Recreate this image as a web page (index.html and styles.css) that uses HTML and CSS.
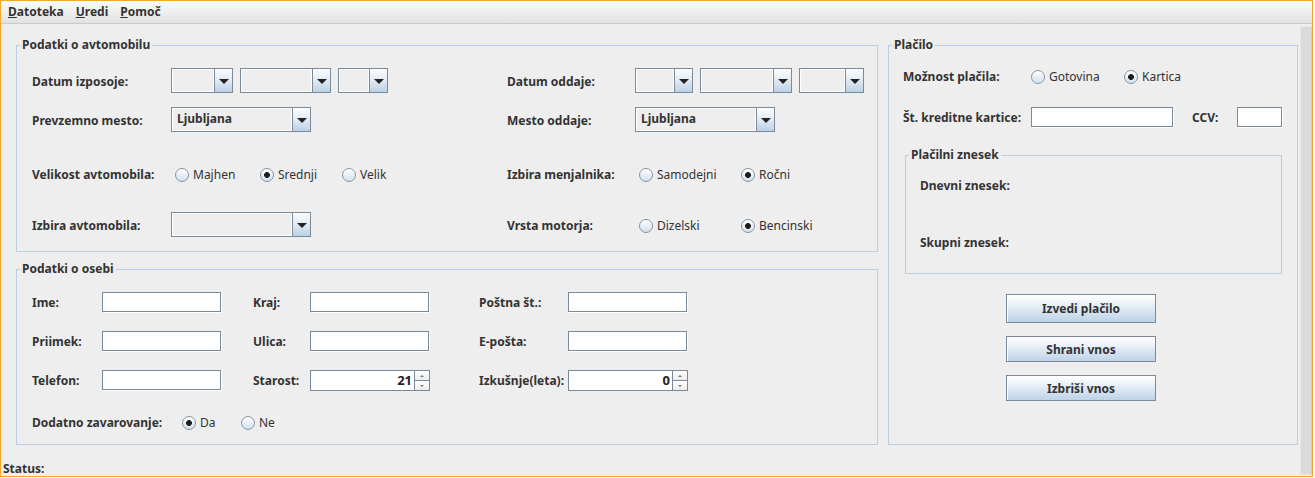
FILE: index.html
```html
<!DOCTYPE html>
<html lang="sl">
<head>
<meta charset="utf-8">
<title>Najem avtomobila</title>
<link rel="stylesheet" href="styles.css">
</head>
<body>
<div class="window">
  <nav class="menubar">
    <span class="menu"><u>D</u>atoteka</span>
    <span class="menu"><u>U</u>redi</span>
    <span class="menu"><u>P</u>omoč</span>
  </nav>
  <div class="frame">
    <div class="main">
      <div class="content">
        <div class="left">
          <fieldset class="panel">
            <legend>Podatki o avtomobilu</legend>
            <div class="car-rows">
              <div class="car-row">
                <span class="lbl">Datum izposoje:</span>
                <div class="combos">
                  <div class="combo w62"><div class="field"></div><div class="arrow"></div></div>
                  <div class="combo w91"><div class="field"></div><div class="arrow"></div></div>
                  <div class="combo w50"><div class="field"></div><div class="arrow"></div></div>
                </div>
                <span class="lbl">Datum oddaje:</span>
                <div class="combos">
                  <div class="combo w58"><div class="field"></div><div class="arrow"></div></div>
                  <div class="combo w92"><div class="field"></div><div class="arrow"></div></div>
                  <div class="combo w65"><div class="field"></div><div class="arrow"></div></div>
                </div>
              </div>
              <div class="car-row gap14">
                <span class="lbl">Prevzemno mesto:</span>
                <div class="combo w140"><div class="field">Ljubljana</div><div class="arrow"></div></div>
                <span class="lbl">Mesto oddaje:</span>
                <div class="combo w140"><div class="field">Ljubljana</div><div class="arrow"></div></div>
              </div>
              <div class="car-row short gap32">
                <span class="lbl">Velikost avtomobila:</span>
                <div class="radios size">
                  <span class="radio">Majhen</span>
                  <span class="radio on">Srednji</span>
                  <span class="radio">Velik</span>
                </div>
                <span class="lbl">Izbira menjalnika:</span>
                <div class="radios pair">
                  <span class="radio">Samodejni</span>
                  <span class="radio on">Ročni</span>
                </div>
              </div>
              <div class="car-row gap28">
                <span class="lbl">Izbira avtomobila:</span>
                <div class="combo w140"><div class="field"></div><div class="arrow"></div></div>
                <span class="lbl">Vrsta motorja:</span>
                <div class="radios pair">
                  <span class="radio">Dizelski</span>
                  <span class="radio on">Bencinski</span>
                </div>
              </div>
            </div>
          </fieldset>

          <fieldset class="panel">
            <legend>Podatki o osebi</legend>
            <div class="person">
              <div class="person-grid">
                <span class="lbl">Ime:</span>
                <div class="text"></div>
                <span class="lbl mid">Kraj:</span>
                <div class="text"></div>
                <span class="lbl last">Poštna št.:</span>
                <div class="text"></div>

                <span class="lbl">Priimek:</span>
                <div class="text"></div>
                <span class="lbl mid">Ulica:</span>
                <div class="text"></div>
                <span class="lbl last">E-pošta:</span>
                <div class="text"></div>

                <span class="lbl">Telefon:</span>
                <div class="text"></div>
                <span class="lbl mid">Starost:</span>
                <div class="spinner"><div class="value">21</div><div class="spin-btns"><span class="up"></span><span class="down"></span></div></div>
                <span class="lbl last">Izkušnje(leta):</span>
                <div class="spinner"><div class="value">0</div><div class="spin-btns"><span class="up"></span><span class="down"></span></div></div>
              </div>
              <div class="extra">
                <span class="lbl">Dodatno zavarovanje:</span>
                <div class="radios yesno">
                  <span class="radio on">Da</span>
                  <span class="radio">Ne</span>
                </div>
              </div>
            </div>
          </fieldset>
        </div>

        <fieldset class="panel right">
          <legend>Plačilo</legend>
          <div class="pay">
            <div class="pay-row">
              <span class="lbl">Možnost plačila:</span>
              <div class="radios cash">
                <span class="radio">Gotovina</span>
                <span class="radio on">Kartica</span>
              </div>
            </div>
            <div class="pay-row card">
              <span class="lbl">Št. kreditne kartice:</span>
              <div class="text wide"></div>
              <span class="lbl ccv">CCV:</span>
              <div class="text narrow"></div>
            </div>
            <fieldset class="panel amount">
              <legend>Plačilni znesek</legend>
              <div class="amount-rows">
                <span class="lbl">Dnevni znesek:</span>
                <span class="lbl total">Skupni znesek:</span>
              </div>
            </fieldset>
            <div class="buttons">
              <button class="btn tall" type="button">Izvedi plačilo</button>
              <button class="btn" type="button">Shrani vnos</button>
              <button class="btn" type="button">Izbriši vnos</button>
            </div>
          </div>
        </fieldset>
      </div>
      <div class="status">Status:</div>
    </div>
    <div class="scrollbar"></div>
  </div>
</div>
</body>
</html>
```

FILE: styles.css
```css
* { box-sizing: border-box; }
html, body { margin: 0; }
body {
  background: #fff;
  font-family: "Noto Sans", "Open Sans", "DejaVu Sans", sans-serif;
  font-size: 12px;
  color: #333;
}

.window {
  width: 1313px;
  height: 477px;
  border: 1px solid #f4a62a;
  background: #eeeeee;
  display: flex;
  flex-direction: column;
}

/* menu bar */
.menubar {
  flex: none;
  height: 23px;
  display: flex;
  padding-left: 1px;
  border-bottom: 1px solid #cacaca;
  background: linear-gradient(#fbfbfb, #e2e2e2);
}
.menu {
  padding: 0 6px;
  line-height: 22px;
  font-weight: bold;
  color: #333;
}

.frame { flex: 1; display: flex; min-height: 0; }
.main { flex: 1; display: flex; flex-direction: column; }
.content {
  display: flex;
  gap: 10px;
  padding: 13px 2px 0 15px;
}
.left {
  width: 862px;
  display: flex;
  flex-direction: column;
  gap: 9px;
}
.scrollbar {
  width: 12px;
  margin: 2px 0 1px;
  background: #dadada;
  border: 1px solid #e6e6e6;
  border-right-color: #cfcfcf;
}
.status {
  margin-top: auto;
  padding-left: 2px;
  line-height: 14px;
  font-weight: bold;
}

/* titled borders */
.panel {
  margin: 0;
  padding: 0;
  min-width: 0;
  border: 1px solid #b8cfe5;
}
.panel > legend {
  margin-left: 3px;
  padding: 0 2px;
  line-height: 16px;
  font-weight: bold;
  color: #333;
}

.lbl {
  font-weight: bold;
  line-height: 16px;
  padding-top: 2px;
  white-space: nowrap;
}

/* car panel */
.car-rows { padding: 15px 0 14px 15px; }
.car-row {
  display: grid;
  grid-template-columns: 139px 336px 128px 1fr;
  align-items: center;
  height: 25px;
}
.car-row.short { height: 20px; }
.gap14 { margin-top: 14px; }
.gap32 { margin-top: 32px; }
.gap28 { margin-top: 28px; }

.combos { display: flex; gap: 7px; }
.combo {
  display: flex;
  height: 25px;
  border: 1px solid #7a8a99;
}
.combo .field {
  flex: 1;
  background: #eeeeee;
  box-shadow: inset 1px 1px 0 #fff, inset -1px -1px 0 #fff;
  padding-left: 5px;
  font-weight: bold;
  line-height: 22px;
}
.combo .arrow {
  flex: none;
  width: 18px;
  border-left: 1px solid #7a8a99;
  background: linear-gradient(#fdfeff, #e3ecf5 45%, #bcd1e6);
  display: flex;
  align-items: center;
  justify-content: center;
}
.combo .arrow::before {
  content: "";
  border-left: 5px solid transparent;
  border-right: 5px solid transparent;
  border-top: 5px solid #222;
  margin-top: 1px;
}
.w62 { width: 62px; }
.w91 { width: 91px; }
.w50 { width: 50px; }
.w58 { width: 58px; }
.w92 { width: 92px; }
.w65 { width: 65px; }
.w140 { width: 140px; }

/* radios */
.radios { display: grid; align-items: center; }
.radios.size { grid-template-columns: 85px 82px auto; }
.radios.pair { grid-template-columns: 102px auto; }
.radios.cash { grid-template-columns: 93px auto; }
.radios.yesno { grid-template-columns: 59px auto; }
.radio {
  display: flex;
  align-items: center;
  gap: 4px;
  padding: 2px 0 0 4px;
  line-height: 16px;
  white-space: nowrap;
}
.radio::before {
  content: "";
  flex: none;
  width: 12px;
  height: 12px;
  border-radius: 50%;
  border: 1px solid #8695a4;
  background: linear-gradient(#ffffff, #d3e0ee);
}
.radio.on::before {
  background:
    radial-gradient(circle at 50% 50%, #1e1e1e 0 2.6px, transparent 3.2px),
    linear-gradient(#ffffff, #d3e0ee);
}

/* text fields */
.text {
  width: 120px;
  height: 20px;
  background: #fff;
  border: 1px solid #7a8a99;
  box-shadow: 1px 1px 0 #fff;
}

/* person panel */
.person { padding: 15px 0 12px 15px; }
.person-grid {
  display: grid;
  grid-template-columns: 70px 120px 88px 120px 138px 120px;
  grid-auto-rows: 20px;
  row-gap: 19px;
  align-items: center;
}
.person-grid .text { width: 119px; }
.lbl.mid { padding-left: 31px; }
.lbl.last { padding-left: 49px; }
.extra {
  display: grid;
  grid-template-columns: 146px auto;
  align-items: center;
  height: 20px;
  margin-top: 22px;
}

.spinner { display: flex; width: 120px; height: 21px; margin-top: 1px; }
.spinner .value {
  flex: 1;
  background: #fff;
  border: 1px solid #7a8a99;
  border-right: none;
  text-align: right;
  padding-right: 2px;
  font-weight: bold;
  font-size: 13px;
  line-height: 19px;
  color: #222;
}
.spin-btns { width: 16px; display: flex; flex-direction: column; }
.spin-btns span {
  flex: 1;
  border: 1px solid #7a8a99;
  background: linear-gradient(#fff, #ececec);
  display: flex;
  align-items: center;
  justify-content: center;
}
.spin-btns span + span { border-top: none; }
.spin-btns .up::before {
  content: "";
  border-left: 2px solid transparent;
  border-right: 2px solid transparent;
  border-bottom: 2px solid #777;
}
.spin-btns .down::before {
  content: "";
  border-left: 2px solid transparent;
  border-right: 2px solid transparent;
  border-top: 2px solid #777;
}

/* payment panel */
.right { width: 410px; }
.pay { padding: 13px 15px 0 14px; }
.pay-row {
  display: grid;
  grid-template-columns: 124px auto;
  align-items: center;
  height: 20px;
}
.pay-row.card {
  grid-template-columns: 128px 142px 64px 45px;
  margin-top: 21px;
}
.text.wide { width: 142px; }
.text.narrow { width: 45px; }
.lbl.ccv { padding-left: 19px; }

.amount { margin: 20px 0 0 2px; }
.amount-rows {
  display: flex;
  flex-direction: column;
  align-items: flex-start;
  padding: 13px 0 22px 14px;
}
.amount-rows .total { margin-top: 39px; }

.buttons {
  display: flex;
  flex-direction: column;
  gap: 13px;
  width: 150px;
  margin: 20px 0 0 103px;
}
.btn {
  height: 26px;
  padding: 0;
  border: 1px solid #7a8a99;
  background: linear-gradient(#ffffff, #eaf1f8 35%, #bdd2e7);
  box-shadow: inset 1px 1px 0 #fff;
  font-family: inherit;
  font-size: 12px;
  font-weight: bold;
  color: #333;
}
.btn.tall { height: 29px; }
```
